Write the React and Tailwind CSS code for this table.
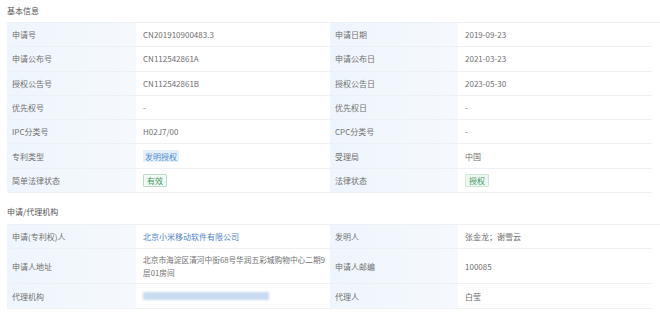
import React from "react";

const F = { fontFamily: '"Noto Sans CJK SC", "Noto Sans", sans-serif' };

function Cell({ label, children, h = "h-[24.3px]" }) {
  return (
    <>
      <div className={`${h} flex items-center pl-[5px] bg-gradient-to-r from-[#eef5fc] to-[#f5f9fd] border-b border-[#eef1f4] text-[#707070]`}>{label}</div>
      <div className={`${h} flex items-center pl-[7px] bg-white border-b border-[#eef1f4] text-[#707070]`}>{children}</div>
    </>
  );
}

export default function App() {
  return (
    <div className="w-[660px] h-[319px] bg-white text-[8px] leading-[11px] overflow-hidden" style={F}>
      <div className="pl-[7px] pt-[5px] h-[22px] text-[#555] text-[8px]">基本信息</div>
      <div className="ml-[7px] grid grid-cols-[129px_194px_128px_194px] border-t border-[#eef1f4]">
        <Cell label="申请号">CN201910900483.3</Cell>
        <Cell label="申请日期">2019-09-23</Cell>
        <Cell label="申请公布号">CN112542861A</Cell>
        <Cell label="申请公布日">2021-03-23</Cell>
        <Cell label="授权公告号">CN112542861B</Cell>
        <Cell label="授权公告日">2023-05-30</Cell>
        <Cell label="优先权号">-</Cell>
        <Cell label="优先权日">-</Cell>
        <Cell label="IPC分类号">H02J7/00</Cell>
        <Cell label="CPC分类号">-</Cell>
        <Cell label="专利类型">
          <span className="px-[2px] h-[12px] flex items-center bg-[#e4f0fb] text-[#4f8ccc] rounded-[1px]">发明授权</span>
        </Cell>
        <Cell label="受理局">中国</Cell>
        <Cell label="简单法律状态">
          <span className="px-[3px] h-[13px] flex items-center bg-[#f1faf4] text-[#3f9a67] border border-[#b9dcc6] rounded-[1px]">有效</span>
        </Cell>
        <Cell label="法律状态">
          <span className="px-[3px] h-[13px] flex items-center bg-[#eef8f1] text-[#3f9a67] border border-[#cfe7d7] rounded-[1px]">授权</span>
        </Cell>
      </div>
      <div className="pl-[7px] pt-[13px] h-[31px] text-[#555] text-[8px]">申请/代理机构</div>
      <div className="ml-[7px] grid grid-cols-[129px_194px_128px_194px] border-t border-[#eef1f4]">
        <Cell label="申请(专利权)人">
          <span className="text-[#4f84c4]">北京小米移动软件有限公司</span>
        </Cell>
        <Cell label="发明人">张金龙；谢雪云</Cell>
        <Cell label="申请人地址" h="h-[35px]">
          <span className="leading-[13px] text-[7.7px]">北京市海淀区清河中街68号华润五彩城购物中心二期9层01房间</span>
        </Cell>
        <Cell label="申请人邮编" h="h-[35px]">100085</Cell>
        <Cell label="代理机构">
          <span className="block w-[126px] h-[8px] bg-[#c9daf1] rounded-[2px] blur-[1px]" />
        </Cell>
        <Cell label="代理人">白莹</Cell>
      </div>
    </div>
  );
}
